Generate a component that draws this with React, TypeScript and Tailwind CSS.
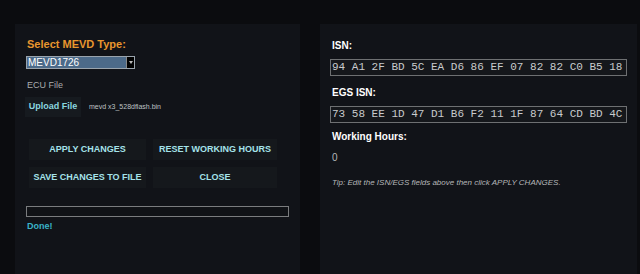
export default function App() {
  return (
    <div className="w-[640px] h-[274px] overflow-hidden bg-[#0b0c0f] pt-[24px] pl-[15px] flex gap-[20px] font-['Liberation_Sans',Arial,sans-serif]">
      <div className="w-[285px] h-[250px] bg-[#111318] pl-[12px] pt-[14px] flex flex-col">
        <h3 className="text-[11px] font-bold text-[#e8962e] leading-[13px]">Select MEVD Type:</h3>
        <div className="mt-[5px] ml-[-1px] w-[109px] h-[13px] border border-[#9aa4ad] bg-[#4c6a89] flex">
          <span className="flex-1 text-[10px] leading-[11px] text-white pl-[1px]">MEVD1726</span>
          <span className="w-[8px] h-full bg-black border-l border-[#888] flex items-center justify-center">
            <span className="block w-0 h-0 border-l-[2px] border-r-[2px] border-t-[3px] border-l-transparent border-r-transparent border-t-[#bbb]" />
          </span>
        </div>
        <p className="mt-[11px] text-[9px] leading-[11px] text-[#a9abad]">ECU File</p>
        <div className="mt-[6px] ml-[-2px] flex items-center gap-[8px]">
          <button className="h-[20px] w-[56px] bg-[#161a1f] text-[9px] font-bold text-[#8ad6df]">Upload File</button>
          <span className="text-[7px] text-[#bfc2c4]">mevd x3_528dflash.bin</span>
        </div>
        <div className="mt-[22px] ml-[2px] grid grid-cols-[117px_124px] gap-x-[7px] gap-y-[7px]">
          <button className="h-[21px] bg-[#15181c] text-[9px] font-bold text-[#a5e3ea]">APPLY CHANGES</button>
          <button className="h-[21px] bg-[#15181c] text-[9px] font-bold text-[#a5e3ea]">RESET WORKING HOURS</button>
          <button className="h-[21px] bg-[#15181c] text-[9px] font-bold text-[#a5e3ea]">SAVE CHANGES TO FILE</button>
          <button className="h-[21px] bg-[#15181c] text-[9px] font-bold text-[#a5e3ea]">CLOSE</button>
        </div>
        <div className="mt-[18px] ml-[-1px] w-[263px] h-[11px] border border-[#7a7c7e] bg-[#101216]" />
        <p className="mt-[3px] text-[9px] font-bold text-[#39b4c7]">Done!</p>
      </div>
      <div className="w-[317px] h-[250px] bg-[#111318] pl-[12px] pt-[16px] flex flex-col">
        <h3 className="text-[10px] font-bold text-white leading-[12px]">ISN:</h3>
        <div className="mt-[7px] ml-[-2px] w-[297px] h-[17px] border border-[#6e7072] bg-[#15171b] overflow-hidden whitespace-nowrap font-['Liberation_Mono','Courier_New',monospace] text-[11px] leading-[15px] text-[#c9cbcd] pl-[1px]">
          94 A1 2F BD 5C EA D6 86 EF 07 82 82 C0 B5 18
        </div>
        <h3 className="mt-[11px] text-[10px] font-bold text-white leading-[12px]">EGS ISN:</h3>
        <div className="mt-[7px] ml-[-2px] w-[297px] h-[17px] border border-[#6e7072] bg-[#15171b] overflow-hidden whitespace-nowrap font-['Liberation_Mono','Courier_New',monospace] text-[11px] leading-[15px] text-[#c9cbcd] pl-[1px]">
          73 58 EE 1D 47 D1 B6 F2 11 1F 87 64 CD BD 4C
        </div>
        <h3 className="mt-[8px] text-[10px] font-bold text-white leading-[12px]">Working Hours:</h3>
        <p className="mt-[9px] text-[10px] text-[#b5b7b9] leading-[12px]">0</p>
        <p className="mt-[14px] text-[8px] italic text-[#b5b7b9] leading-[10px]">Tip: Edit the ISN/EGS fields above then click APPLY CHANGES.</p>
      </div>
    </div>
  );
}
